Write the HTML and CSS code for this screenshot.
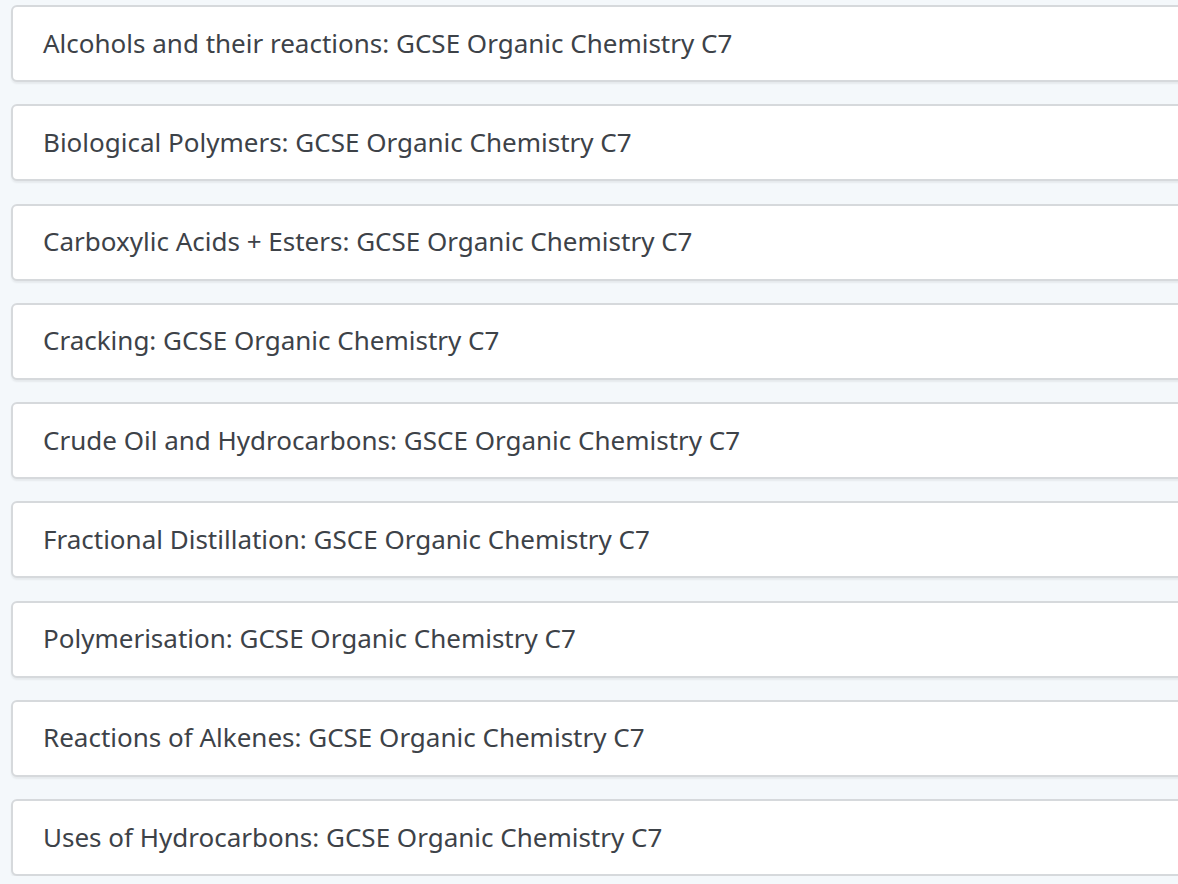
FILE: index.html
```html
<!DOCTYPE html>
<html lang="en">
<head>
    <meta charset="UTF-8">
    <meta name="viewport" content="width=device-width, initial-scale=1.0">
    <title>Organic Chemistry C7</title>
    <link rel="stylesheet" href="styles.css">
</head>
<body>
    <ul class="lesson-list">
        <li class="lesson">Alcohols and their reactions: GCSE Organic Chemistry C7</li>
        <li class="lesson">Biological Polymers: GCSE Organic Chemistry C7</li>
        <li class="lesson">Carboxylic Acids + Esters: GCSE Organic Chemistry C7</li>
        <li class="lesson">Cracking: GCSE Organic Chemistry C7</li>
        <li class="lesson">Crude Oil and Hydrocarbons: GSCE Organic Chemistry C7</li>
        <li class="lesson">Fractional Distillation: GSCE Organic Chemistry C7</li>
        <li class="lesson">Polymerisation: GCSE Organic Chemistry C7</li>
        <li class="lesson">Reactions of Alkenes: GCSE Organic Chemistry C7</li>
        <li class="lesson">Uses of Hydrocarbons: GCSE Organic Chemistry C7</li>
    </ul>
</body>
</html>
```

FILE: styles.css
```css
body {
    margin: 0;
    padding: 0;
    background-color: #f4f8fb;
    font-family: "Noto Sans", Arial, sans-serif;
    color: #3d4248;
    overflow: hidden;
}
.lesson-list {
    list-style: none;
    margin: 0;
    padding: 5px 0 0 11px;
    display: flex;
    flex-direction: column;
    gap: 22.25px;
    width: 1200px;
}
.lesson {
    height: 77px;
    box-sizing: border-box;
    display: flex;
    align-items: center;
    padding: 0 0 2px 30px;
    background-color: #ffffff;
    border: 2px solid #d6d9dc;
    border-radius: 6px;
    box-shadow: 0 2px 2px rgba(0,0,0,0.06);
    font-size: 26px;
}
```
